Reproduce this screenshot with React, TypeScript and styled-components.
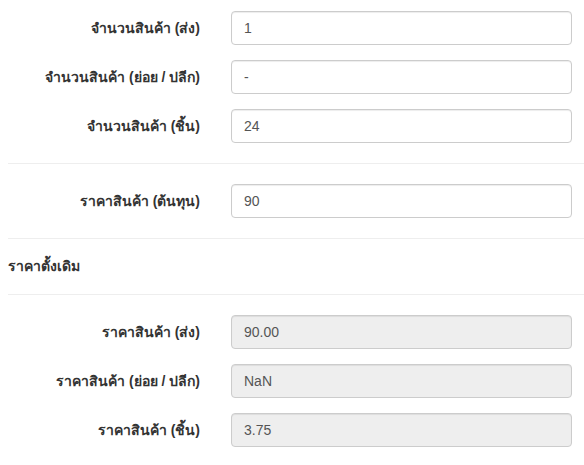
import React from "react";
import styled, { createGlobalStyle } from "styled-components";

const GlobalStyle = createGlobalStyle`
  html, body { margin: 0; padding: 0; background: #fff; }
  body {
    font-family: "Liberation Sans", Arial, "Noto Sans", sans-serif;
    font-size: 14px;
    line-height: 20px;
    color: #333;
  }
  * { box-sizing: border-box; }
`;

const Page = styled.form`
  padding: 11px 0 0 8px;
  width: 584px;
`;

const Group = styled.div`
  display: grid;
  grid-template-columns: 208px 1fr;
  margin-bottom: 15px;
`;

const Label = styled.label`
  padding: 7px 16px 0 0;
  text-align: right;
  font-weight: bold;
  line-height: 20px;
`;

const Field = styled.div`
  padding-left: 15px;
`;

const Input = styled.input<{ disabled?: boolean }>`
  display: block;
  width: 341px;
  height: 34px;
  padding: 6px 12px;
  font-family: inherit;
  font-size: 14px;
  line-height: 20px;
  color: #555;
  background: ${(p) => (p.disabled ? "#eee" : "#fff")};
  border: 1px solid #ccc;
  border-radius: 4px;
  box-shadow: inset 0 1px 1px rgba(0, 0, 0, 0.075);
  outline: none;
  opacity: 1;
  -webkit-text-fill-color: #555;
`;

const Divider = styled.hr`
  margin: 20px 0;
  border: 0;
  border-top: 1px solid #eee;
  height: 0;
`;

const Heading = styled.div`
  font-weight: bold;
  font-size: 14px;
  line-height: 15px;
`;

type Row = { label: string; value: string };

const qty: Row[] = [
  { label: "จำนวนสินค้า (ส่ง)", value: "1" },
  { label: "จำนวนสินค้า (ย่อย / ปลีก)", value: "-" },
  { label: "จำนวนสินค้า (ชิ้น)", value: "24" },
];

const prices: Row[] = [
  { label: "ราคาสินค้า (ส่ง)", value: "90.00" },
  { label: "ราคาสินค้า (ย่อย / ปลีก)", value: "NaN" },
  { label: "ราคาสินค้า (ชิ้น)", value: "3.75" },
];

const FormRow = ({ label, value, disabled }: Row & { disabled?: boolean }) => (
  <Group>
    <Label>{label}</Label>
    <Field>
      <Input defaultValue={value} disabled={disabled} readOnly />
    </Field>
  </Group>
);

export default function App() {
  return (
    <>
      <GlobalStyle />
      <Page>
        {qty.map((r) => (
          <FormRow key={r.label} {...r} />
        ))}
        <Divider />
        <FormRow label="ราคาสินค้า (ต้นทุน)" value="90" />
        <Divider />
        <Heading>ราคาตั้งเดิม</Heading>
        <Divider />
        {prices.map((r) => (
          <FormRow key={r.label} {...r} disabled />
        ))}
      </Page>
    </>
  );
}
